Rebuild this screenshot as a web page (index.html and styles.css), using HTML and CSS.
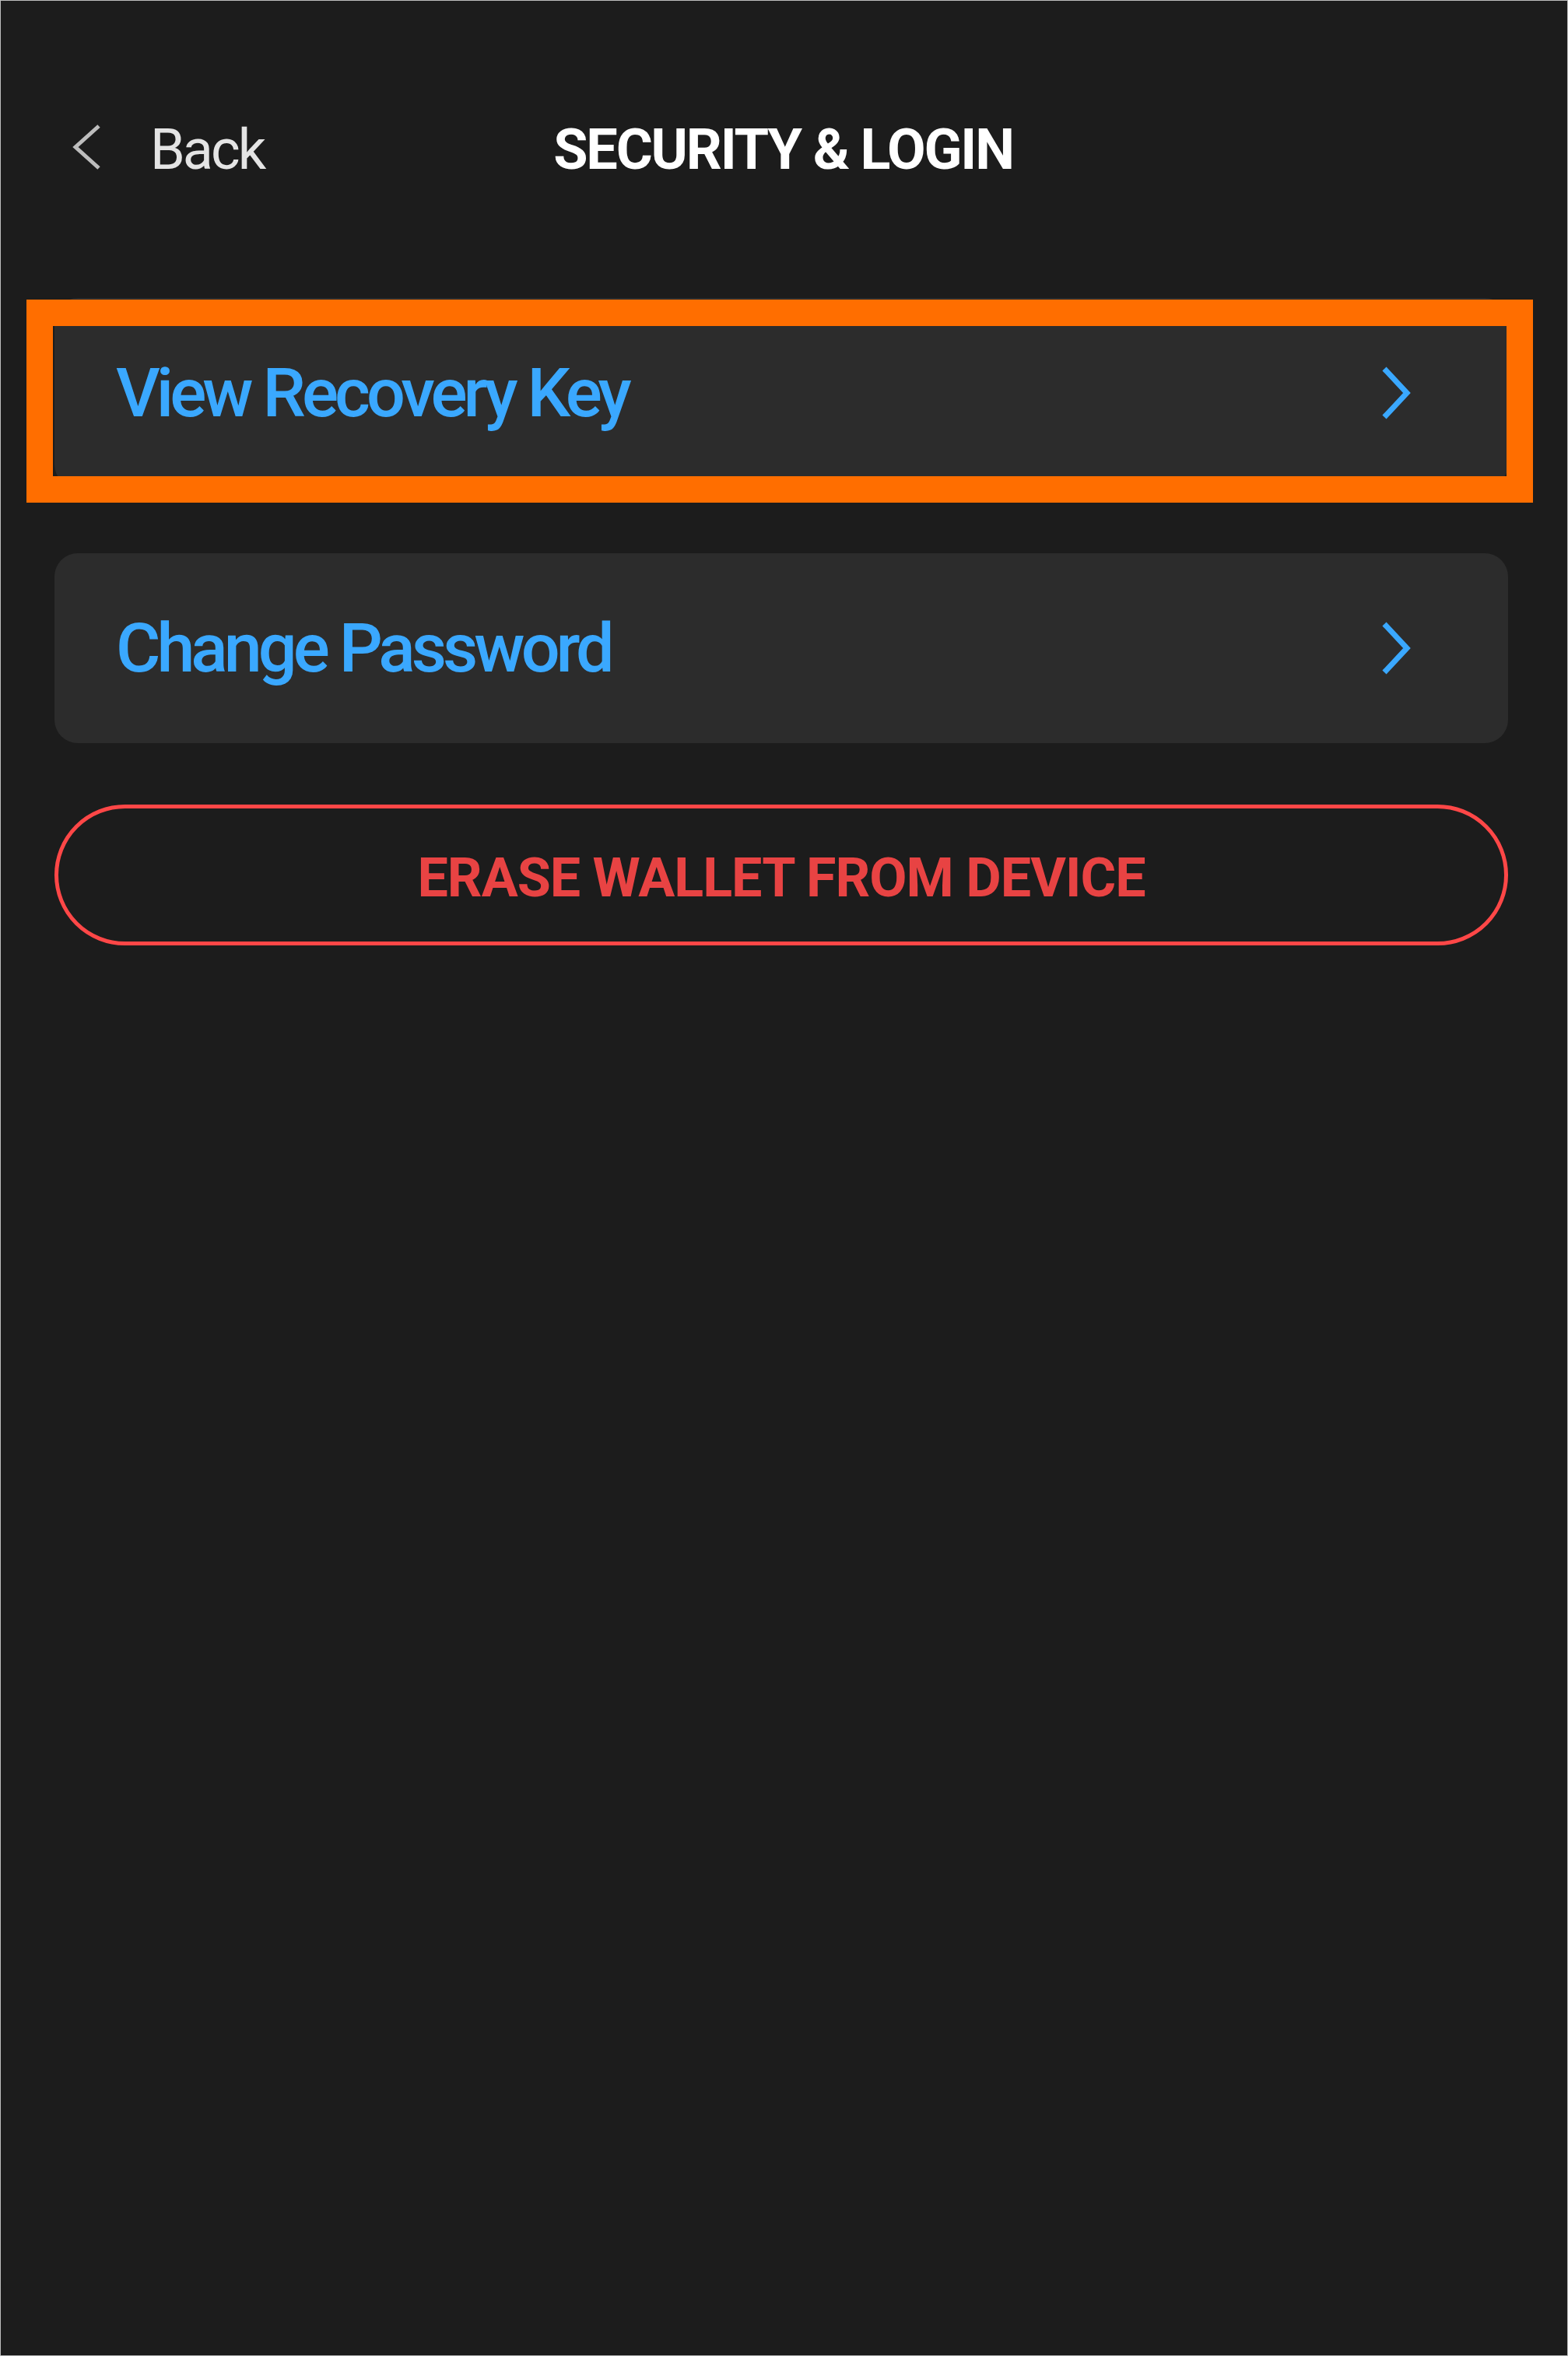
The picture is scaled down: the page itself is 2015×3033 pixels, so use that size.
FILE: index.html
```html
<!DOCTYPE html>
<html lang="en">
<head>
<meta charset="utf-8">
<title>Security &amp; Login</title>
<link rel="stylesheet" href="styles.css">
</head>
<body>
<div class="frame">
  <header class="topbar">
    <div class="back">
      <svg class="back-icon" width="40" height="60" viewBox="0 0 40 60" aria-hidden="true">
        <path d="M36 3 L6 30 L36 57" fill="none" stroke="#bdbdbd" stroke-width="5" stroke-linejoin="miter"/>
      </svg>
      <span class="back-label">Back</span>
    </div>
    <h1 class="title">SECURITY &amp; LOGIN</h1>
    <div class="spacer"></div>
  </header>

  <main class="content">
    <div class="row-wrap">
      <div class="row">
        <span class="row-label">View Recovery Key</span>
        <svg class="chev" width="40" height="70" viewBox="0 0 40 70" aria-hidden="true">
          <path d="M5 4 L34 35 L5 66" fill="none" stroke="#3aa8ff" stroke-width="7"/>
        </svg>
      </div>
      <div class="highlight"></div>
    </div>

    <div class="row">
      <span class="row-label">Change Password</span>
      <svg class="chev" width="40" height="70" viewBox="0 0 40 70" aria-hidden="true">
        <path d="M5 4 L34 35 L5 66" fill="none" stroke="#3aa8ff" stroke-width="7"/>
      </svg>
    </div>

    <button class="erase" type="button">ERASE WALLET FROM DEVICE</button>
  </main>
</div>
</body>
</html>
```

FILE: styles.css
```css
html, body {
  margin: 0;
  padding: 0;
  background: #ffffff;
}

.frame {
  box-sizing: border-box;
  width: 2015px;
  height: 3028px;
  background: #1c1c1c;
  border: 1px solid #bdbdbd;
  font-family: Roboto, "Liberation Sans", sans-serif;
}

.topbar {
  display: grid;
  grid-template-columns: 1fr auto 1fr;
  align-items: center;
  padding: 156px 92px 0 90px;
  height: 72px;
}

.back {
  display: flex;
  align-items: center;
  gap: 62px;
}

.back-icon {
  display: block;
  margin-bottom: 8px;
}

.back-label {
  font-size: 72px;
  line-height: 72px;
  color: #e4e4e4;
  letter-spacing: -3px;
}

.title {
  margin: 0;
  font-size: 72px;
  line-height: 72px;
  font-weight: 700;
  color: #ffffff;
  letter-spacing: -2.2px;
}

.content {
  display: flex;
  flex-direction: column;
  gap: 84px;
  padding: 154px 76px 0 69px;
}

.row-wrap {
  position: relative;
}

.row {
  display: flex;
  align-items: center;
  justify-content: space-between;
  box-sizing: border-box;
  height: 244px;
  padding: 0 124px 0 79px;
  background: #2c2c2c;
  border-radius: 30px;
}

.row-label {
  font-size: 88px;
  line-height: 88px;
  font-weight: 500;
  color: #3aa8ff;
  letter-spacing: -5px;
}

.chev {
  display: block;
}

.highlight {
  position: absolute;
  left: -36px;
  top: 2px;
  right: -32px;
  bottom: -19px;
  border: 34px solid #ff6e00;
  pointer-events: none;
}

.erase {
  box-sizing: border-box;
  height: 181px;
  margin-top: -5px;
  padding: 6px 0 0 0;
  background: transparent;
  border: 5px solid #ff4747;
  border-radius: 91px;
  font-family: Roboto, "Liberation Sans", sans-serif;
  font-size: 70px;
  font-weight: 700;
  color: #e84343;
  letter-spacing: -1px;
}
```
